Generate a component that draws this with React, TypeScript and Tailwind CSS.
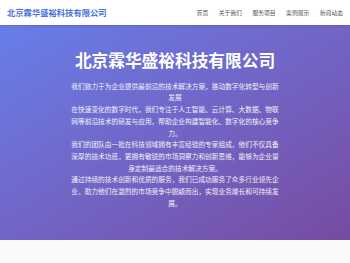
import React from 'react';

const navItems = ['首页', '关于我们', '服务项目', '案例展示', '新闻动态'];

const paragraphs = [
    '我们致力于为企业提供最前沿的技术解决方案，推动数字化转型与创新发展',
    '在快速变化的数字时代，我们专注于人工智能、云计算、大数据、物联网等前沿技术的研发与应用，帮助企业构建智能化、数字化的核心竞争力。',
    '我们的团队由一批在科技领域拥有丰富经验的专家组成，他们不仅具备深厚的技术功底，更拥有敏锐的市场洞察力和创新思维，能够为企业量身定制最适合的技术解决方案。',
    '通过持续的技术创新和优质的服务，我们已成功服务了众多行业领先企业，助力他们在激烈的市场竞争中脱颖而出，实现业务增长和可持续发展。',
];

const App: React.FC = () => {
    return (
        <div
            className="min-h-[263px] bg-[#f8fafc]"
            style={{ fontFamily: '"Noto Sans CJK SC", "Noto Sans", sans-serif' }}
        >
            <header className="h-[25px] bg-white shadow-[0_1px_3px_rgba(0,0,0,0.12)] flex items-center justify-between pl-[7px] pr-[7px] relative z-10">
                <h1 className="text-[8.3px] font-bold text-[#4a6ee0] leading-none">
                    北京霖华盛裕科技有限公司
                </h1>
                <nav className="flex gap-[10.5px]">
                    {navItems.map((item) => (
                        <a key={item} className="text-[5.8px] text-[#555] leading-none">
                            {item}
                        </a>
                    ))}
                </nav>
            </header>

            <section className="h-[215px] bg-gradient-to-br from-[#667eea] to-[#764ba2] shadow-[0_1px_0_rgba(255,255,255,0.15)] flex flex-col items-center pt-[27px]">
                <h2 className="text-[16.7px] font-bold text-white leading-none mb-[12px]">
                    北京霖华盛裕科技有限公司
                </h2>
                <div className="w-[210px] text-center text-white/90 text-[6.7px] leading-[11.7px] [text-spacing-trim:space-all]">
                    {paragraphs.map((p, i) => (
                        <p key={i}>{p}</p>
                    ))}
                </div>
            </section>
        </div>
    );
};

export default App;
